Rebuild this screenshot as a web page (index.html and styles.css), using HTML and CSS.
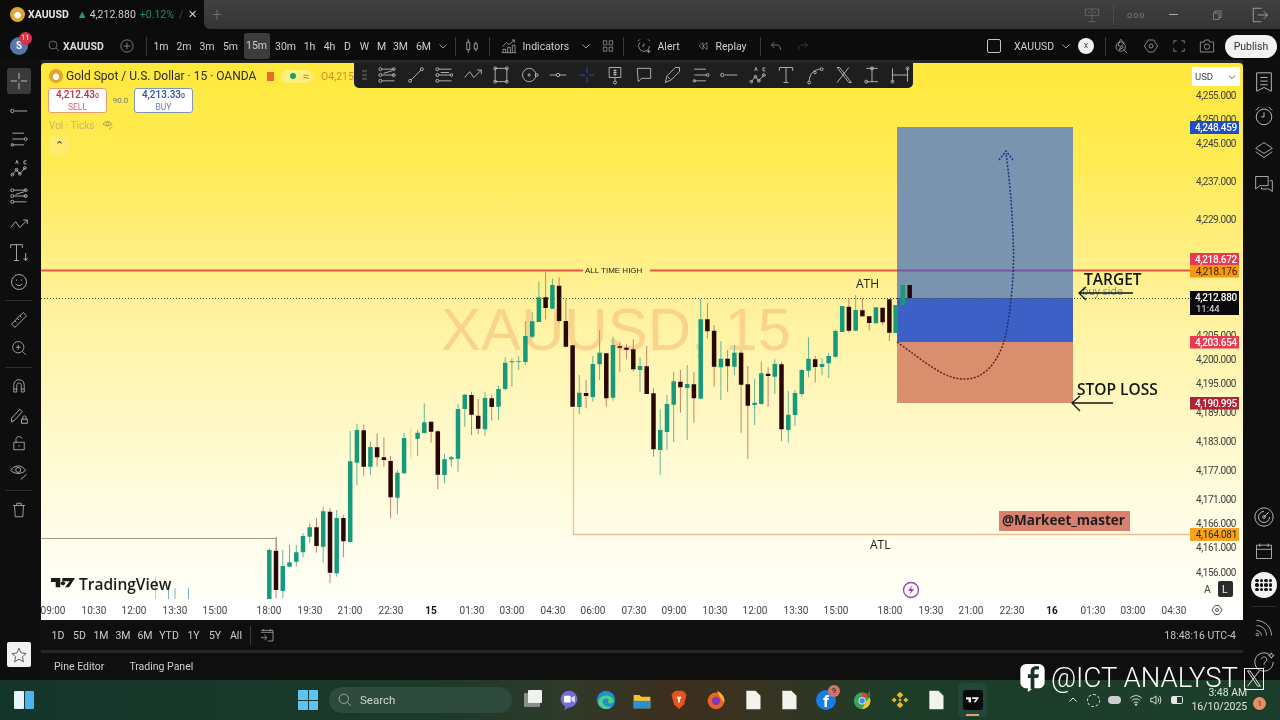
FILE: index.html
```html
<!DOCTYPE html>
<html lang="en">
<head>
<meta charset="utf-8">
<title>XAUUSD</title>
<link rel="stylesheet" href="styles.css">
</head>
<body>
<svg class="defs" aria-hidden="true">
  <symbol id="i-chan" viewBox="0 0 24 24"><path d="M6 5H21M6 12H21M6 19H21M8 10L18 7" /><circle cx="4" cy="5" r="1.8"/><circle cx="4" cy="12" r="1.8"/><circle cx="4" cy="19" r="1.8"/><circle cx="20" cy="5" r="1.8"/><circle cx="20" cy="12" r="1.8"/></symbol>
  <symbol id="i-trend" viewBox="0 0 24 24"><path d="M6 18L18 6"/><circle cx="5" cy="19" r="1.8"/><circle cx="19" cy="5" r="1.8"/></symbol>
  <symbol id="i-fib" viewBox="0 0 24 24"><path d="M6 5H21M6 19H21M6 12H20M8 9H18"/><circle cx="4" cy="5" r="1.8"/><circle cx="4" cy="12" r="1.8"/><circle cx="4" cy="19" r="1.8"/><circle cx="21" cy="12" r="1.5"/></symbol>
  <symbol id="i-zig" viewBox="0 0 24 24"><path d="M2 15L8 8L13 15L22 6M17 6H22V11"/></symbol>
  <symbol id="i-rect" viewBox="0 0 24 24"><path d="M5 4H19V20H5Z"/><circle cx="5" cy="4" r="1.7"/><circle cx="19" cy="4" r="1.7"/><circle cx="5" cy="20" r="1.7"/><circle cx="19" cy="20" r="1.7"/></symbol>
  <symbol id="i-circ" viewBox="0 0 24 24"><circle cx="11" cy="12" r="8"/><circle cx="11" cy="12" r="1.3"/><circle cx="20" cy="12" r="1.7"/></symbol>
  <symbol id="i-hline" viewBox="0 0 24 24"><path d="M2 12H10M14 12H22"/><circle cx="12" cy="12" r="2"/></symbol>
  <symbol id="i-cross" viewBox="0 0 24 24"><path d="M12 3V10M12 14V21M3 12H10M14 12H21"/></symbol>
  <symbol id="i-price" viewBox="0 0 24 24"><path d="M5 3H19V15H5ZM12 15V19M10 6.500H14M10 9H14M10 11.500H14M12 5V13"/><circle cx="12" cy="21" r="1.8"/></symbol>
  <symbol id="i-bubble" viewBox="0 0 24 24"><path d="M4 4H20V16H9L5 20Z"/></symbol>
  <symbol id="i-brush" viewBox="0 0 24 24"><path d="M4 21L6 13L16 3H21V8L11 18Z M7 14L10 17"/></symbol>
  <symbol id="i-lines" viewBox="0 0 24 24"><path d="M4 5H18M4 12H18M4 19H18"/><circle cx="20" cy="12" r="1.7"/><circle cx="4" cy="19" r="1.5"/></symbol>
  <symbol id="i-ray" viewBox="0 0 24 24"><path d="M7 12H22"/><circle cx="4" cy="12" r="2"/></symbol>
  <symbol id="i-abc" viewBox="0 0 24 24"><path d="M4 20L9 14L13 19L19 12"/><circle cx="4" cy="20" r="1.6"/><circle cx="9" cy="14" r="1.6"/><circle cx="13" cy="19" r="1.6"/><circle cx="19" cy="12" r="1.6"/><path d="M8 7L9.500 3L11 7M18 3.500H21M18 3.500V7H21"/></symbol>
  <symbol id="i-t" viewBox="0 0 24 24"><path d="M4 7V3H20V7M12 3V21M9 21H15"/></symbol>
  <symbol id="i-t2" viewBox="0 0 24 24"><path d="M2 6V2H16V6M9 2V21M6 21H12M20 12V21M17.500 18L20 21L22.500 18"/></symbol>
  <symbol id="i-curve" viewBox="0 0 24 24"><path d="M5 19C6 10 10 6 18 5"/><circle cx="5" cy="21" r="1.7"/><circle cx="12" cy="9" r="1.5"/><circle cx="20" cy="5" r="1.7"/></symbol>
  <symbol id="i-x" viewBox="0 0 24 24"><path d="M5 3L19 21M8 3L22 21M19 3L5 21M5 3H8M19 21H22"/></symbol>
  <symbol id="i-ibeam" viewBox="0 0 24 24"><path d="M5 4H19M5 20H19M12 4V20"/><circle cx="12" cy="4" r="1.8"/><circle cx="5" cy="20" r="1.8"/></symbol>
  <symbol id="i-range" viewBox="0 0 24 24"><path d="M3 4V20M21 4V20M3 12H21"/><circle cx="3" cy="20" r="1.7"/><circle cx="21" cy="4" r="1.7"/></symbol>
  <symbol id="i-smile" viewBox="0 0 24 24"><circle cx="12" cy="12" r="9"/><path d="M8 14C10 17 14 17 16 14M9 9V10.500M15 9V10.500"/></symbol>
  <symbol id="i-ruler" viewBox="0 0 24 24"><path d="M3 17L17 3L21 7L7 21ZM7 13L9 15M10 10L12 12M13 7L15 9"/></symbol>
  <symbol id="i-zoom" viewBox="0 0 24 24"><circle cx="11" cy="11" r="7.500"/><path d="M8 11H14M11 8V14M16.500 16.500L21 21"/></symbol>
  <symbol id="i-magnet" viewBox="0 0 24 24"><path d="M5 20V11C5 1 19 1 19 11V20H15V11C15 7 9 7 9 11V20ZM5 16H9M15 16H19"/></symbol>
  <symbol id="i-plock" viewBox="0 0 24 24"><path d="M3 16L13 5L16 8L6 19L3 20ZM15 17H22V22H15ZM16.500 17V15C16.500 12.500 20.500 12.500 20.500 15V17"/></symbol>
  <symbol id="i-lock" viewBox="0 0 24 24"><path d="M5 11H19V21H5ZM8 11V7C8 2.500 15 2.500 16 6M12 15V17"/></symbol>
  <symbol id="i-eye" viewBox="0 0 24 24"><path d="M2 10C7 3 15 3 20 10C15 15 7 15 2 10Z M14 21L21 15"/><circle cx="11" cy="9.500" r="3"/></symbol>
  <symbol id="i-trash" viewBox="0 0 24 24"><path d="M4 6H20M6 6L7 21H17L18 6M9 6V3H15V6"/></symbol>
  <symbol id="i-star" viewBox="0 0 24 24"><path d="M12 3L14.800 9.300L21.500 10L16.500 14.500L18 21L12 17.600L6 21L7.500 14.500L2.500 10L9.200 9.300Z"/></symbol>
  <symbol id="i-list" viewBox="0 0 24 24"><path d="M4 2H20V22L12 18L4 22ZM8 7H16M8 11H16M8 15H16"/></symbol>
  <symbol id="i-alarm" viewBox="0 0 24 24"><circle cx="12" cy="13" r="8.500"/><path d="M12 8V13H9M3 6L7 2M21 6L17 2"/></symbol>
  <symbol id="i-layers" viewBox="0 0 24 24"><path d="M12 3L22 10L12 16L2 10ZM2 14L12 21L22 14"/></symbol>
  <symbol id="i-chat" viewBox="0 0 24 24"><path d="M2 3H17V14H7L2 18ZM19 8H22V21L18 18H9V16"/></symbol>
  <symbol id="i-radar" viewBox="0 0 24 24"><circle cx="12" cy="12" r="10"/><path d="M17 7L12 12M12 6A6 6 0 1 0 18 12"/><circle cx="12" cy="12" r="1.500"/></symbol>
  <symbol id="i-cal" viewBox="0 0 24 24"><path d="M3 5H21V21H3ZM3 10H21M7 3V7M17 3V7"/></symbol>
  <symbol id="i-pod" viewBox="0 0 24 24"><path d="M3 3C13 3 21 11 21 21M3 9C10 9 15 14 15 21M3 15C6 15 9 18 9 21"/><circle cx="4" cy="20" r="1.500"/></symbol>
  <symbol id="i-help" viewBox="0 0 24 24"><path d="M18 4A10 10 0 1 0 22 12"/><path d="M9 9C10 5 16 6 15 10C14 12 12 12 12 15M12 18V18.500M20 2L21 4L23 5L21 6L20 8L19 6L17 5L19 4Z"/></symbol>
  <symbol id="i-hex" viewBox="0 0 24 24"><path d="M8 3H16L22 12L16 21H8L2 12Z"/><circle cx="12" cy="12" r="3"/></symbol>
  <symbol id="i-full" viewBox="0 0 24 24"><path d="M3 8V3H8M16 3H21V8M21 16V21H16M8 21H3V16"/></symbol>
  <symbol id="i-cam" viewBox="0 0 24 24"><path d="M2 6H8L9 3H15L16 6H22V21H2Z"/><circle cx="12" cy="13" r="4"/></symbol>
  <symbol id="i-flame" viewBox="0 0 24 24"><circle cx="10" cy="13" r="7"/><path d="M15 18L20 23M10 2L15 7L11 12L14 14L8 18L10 13L6 11Z"/></symbol>
  <symbol id="i-candles" viewBox="0 0 24 24"><path d="M7 3V7M7 17V21M17 6V9M17 16V19M5 7H9V17H5ZM15 9H19V16H15Z"/></symbol>
  <symbol id="i-ind" viewBox="0 0 24 24"><path d="M2 13L8 7L12 10L20 3M16 3H20V7M3 22V17H7V22M10 22V14H14V22M17 22V11H21V22M1 22H23"/></symbol>
  <symbol id="i-grid" viewBox="0 0 24 24"><path d="M4 3H10V10H4ZM14 3H20V10H14ZM4 14H10V21H4ZM14 14H20V21H14Z"/></symbol>
  <symbol id="i-alert" viewBox="0 0 24 24"><circle cx="12" cy="12" r="8" stroke-dasharray="30 20"/><path d="M3 5L6 2M21 5L18 2M12 8V12H9M19 17V23M16 20H22"/></symbol>
  <symbol id="i-replay" viewBox="0 0 24 24"><path d="M12 5L4 12L12 19ZM20 5L12 12L20 19Z"/></symbol>
  <symbol id="i-undo" viewBox="0 0 24 24"><path d="M9 4L3 10L9 16M3 10H14C19 10 21 14 21 20"/></symbol>
  <symbol id="i-redo" viewBox="0 0 24 24"><path d="M15 4L21 10L15 16M21 10H10C5 10 3 14 3 20"/></symbol>
  <symbol id="i-goto" viewBox="0 0 24 24"><path d="M3 8H21M7 3V6M17 3V6M3 5H21V21H13M3 16H11M8 12L12 16L8 20"/></symbol>
  <symbol id="i-search" viewBox="0 0 24 24"><circle cx="10" cy="10" r="8"/><path d="M16 16L22 22"/></symbol>
  <symbol id="i-plusc" viewBox="0 0 24 24"><circle cx="12" cy="12" r="10.500"/><path d="M12 6V18M6 12H18"/></symbol>
  <symbol id="i-chev" viewBox="0 0 12 12"><path d="M2.500 4.500L6 8L9.500 4.500"/></symbol>
  <symbol id="i-door" viewBox="0 0 24 24"><path d="M14 3H3V21H14M9 12H22M17 7L22 12L17 17"/></symbol>
  <symbol id="i-restore" viewBox="0 0 24 24"><path d="M5 8H16V21H5ZM8 8V4H20V17H16"/></symbol>
  <symbol id="i-pane" viewBox="0 0 24 24"><path d="M2 3H22V13H2ZM12 3V22M6 22H18M6 8H9M15 8H18"/></symbol>
  <symbol id="i-doc" viewBox="0 0 24 24"><path d="M4 1H15L21 7V23H4Z" /></symbol>
</svg>

<header class="titlebar">
  <div class="tab">
    <span class="coin"></span>
    <b class="tab-sym">XAUUSD</b>
    <span class="up">▲</span>
    <span class="tab-price">4,212.880</span>
    <span class="tab-chg">+0.12%</span>
    <span class="tab-slash">/</span>
    <span class="tab-close">✕</span>
  </div>
  <div class="title-rest">
    <span class="title-plus">+</span>
    <div class="win-ctrls">
      <svg class="ic16 dim"><use href="#i-pane"/></svg>
      <span class="win-sep"></span>
      <span class="win-dots">ooo</span>
      <span class="win-min"></span>
      <svg class="ic12 dim2"><use href="#i-restore"/></svg>
      <svg class="ic18 dim2"><use href="#i-door"/></svg>
    </div>
  </div>
</header>

<nav class="topbar">
  <div class="avatar">S<span class="badge-red">11</span></div>
  <svg class="ic12 ml20"><use href="#i-search"/></svg>
  <b class="sym ml3">XAUUSD</b>
  <svg class="ic14 ml17"><use href="#i-plusc"/></svg>
  <span class="tsep ml12"></span>
  <div class="intervals">
    <span class="iv w23">1m</span><span class="iv w23">2m</span><span class="iv w23">3m</span><span class="iv w24">5m</span>
    <span class="iv iv-on">15m</span>
    <span class="iv w26 ml3">30m</span><span class="iv w20 ml1">1h</span><span class="iv w20">4h</span><span class="iv w16">D</span><span class="iv w18">W</span><span class="iv w16">M</span><span class="iv w22">3M</span><span class="iv w24">6M</span>
    <svg class="ic12 chev"><use href="#i-chev"/></svg>
  </div>
  <span class="tsep ml6"></span>
  <svg class="ic18 ml7"><use href="#i-candles"/></svg>
  <span class="tsep ml8"></span>
  <svg class="ic16 ml11"><use href="#i-ind"/></svg>
  <span class="lbl w46 ml6">Indicators</span>
  <svg class="ic12 chev ml11"><use href="#i-chev"/></svg>
  <svg class="ic14 ml9"><use href="#i-grid"/></svg>
  <span class="tsep ml8"></span>
  <svg class="ic16 ml12"><use href="#i-alert"/></svg>
  <span class="lbl w23 ml6">Alert</span>
  <svg class="ic12 ml16"><use href="#i-replay"/></svg>
  <span class="lbl w32 ml7">Replay</span>
  <span class="tsep ml12"></span>
  <svg class="ic12 ml9"><use href="#i-undo"/></svg>
  <svg class="ic12 ml15 faint"><use href="#i-redo"/></svg>
  <span class="layout-box"></span>
  <span class="lbl w36 ml13">XAUUSD</span>
  <svg class="ic12 chev ml10"><use href="#i-chev"/></svg>
  <span class="x-circle ml6">x</span>
  <span class="tsep ml11"></span>
  <svg class="ic16 ml8"><use href="#i-flame"/></svg>
  <svg class="ic16 ml13"><use href="#i-hex"/></svg>
  <svg class="ic14 ml13"><use href="#i-full"/></svg>
  <svg class="ic16 ml13"><use href="#i-cam"/></svg>
  <span class="publish ml10">Publish</span>
</nav>

<div class="main">
  <aside class="lefttools">
    <span class="tool tool-on"><svg class="ic22"><use href="#i-cross"/></svg></span>
    <span class="tool"><svg class="ic20"><use href="#i-ray"/></svg></span>
    <span class="tool"><svg class="ic20"><use href="#i-lines"/></svg></span>
    <span class="tool"><svg class="ic20"><use href="#i-abc"/></svg></span>
    <span class="tool"><svg class="ic20"><use href="#i-chan"/></svg></span>
    <span class="tool"><svg class="ic20"><use href="#i-zig"/></svg></span>
    <span class="tool"><svg class="ic20"><use href="#i-t2"/></svg></span>
    <span class="tool"><svg class="ic20"><use href="#i-smile"/></svg></span>
    <span class="lsep"></span>
    <span class="tool"><svg class="ic20"><use href="#i-ruler"/></svg></span>
    <span class="tool"><svg class="ic18"><use href="#i-zoom"/></svg></span>
    <span class="lsep"></span>
    <span class="tool"><svg class="ic18"><use href="#i-magnet"/></svg></span>
    <span class="tool"><svg class="ic20"><use href="#i-plock"/></svg></span>
    <span class="tool"><svg class="ic18"><use href="#i-lock"/></svg></span>
    <span class="tool"><svg class="ic20"><use href="#i-eye"/></svg></span>
    <span class="lsep"></span>
    <span class="tool"><svg class="ic18"><use href="#i-trash"/></svg></span>
    <span class="star-btn"><svg class="ic18 star"><use href="#i-star"/></svg></span>
  </aside>

  <div class="center">
    <section class="chart">
      <svg class="plot" viewBox="41 63 1202 557" width="1202" height="557">
        <text class="wm" x="441" y="350">XAUUSD, 15</text>
        <path class="lv-old" d="M41 538.500H276.500V550"/>
        <path class="lv-atl" d="M573.500 408V534.500H1190"/>
        <path class="lv-dot" d="M41 298.500H897"/>
        <g id="candles"></g>
        <path class="vol-a" d="M155.500 577V599"/>
        <path class="vol-b" d="M168.500 588V599M175 588V599M188.500 588V599"/>
        <rect class="zone-t" x="897" y="127" width="176" height="171"/>
        <rect class="zone-m" x="897" y="298" width="176" height="44"/>
        <rect class="zone-s" x="897" y="342" width="176" height="61"/>
        <path class="lv-ath" d="M41 270.500H583M650 270.500H1190"/>
        <path class="lv-ath-z" d="M897 270.500H1073"/>
        <path class="lv-dot" d="M897 298.500H1190"/>
        <path class="c-g" d="M895.600 305V333"/>
        <path class="c-g" d="M902.800 285V305"/>
        <path class="c-b" d="M909.700 285V298"/>
        <path class="arc-red" d="M897 342C925 362 945 380 965 379C988 379 1000 356 1005 338"/>
        <path class="arc-blue" d="M1005 338C1011 310 1015 270 1013 238C1012 205 1009 175 1006 153M999 160L1006 151L1013 160"/>
        <text class="ann-s" x="585" y="273">ALL TIME HIGH</text>
        <text class="ann" x="856" y="288">ATH</text>
        <text class="ann" x="870" y="549">ATL</text>
        <text class="buyside" x="1082" y="295">buy side</text>
        <text class="ann-l" x="1084" y="285">TARGET</text>
        <text class="ann-l" x="1077" y="395">STOP LOSS</text>
        <path class="ann-arrow" d="M1133 293H1079M1086 287L1079 293L1086 300"/>
        <path class="ann-arrow" d="M1113 403H1072M1080 396L1072 403L1080 411"/>
        <rect class="mm-bg" x="999" y="511" width="131" height="20"/>
        <text class="mm" x="1002" y="525">@Markeet_master</text>

        <g class="pr">
          <text x="1236" y="99">4,255.000</text><text x="1236" y="123">4,250.000</text><text x="1236" y="147">4,245.000</text><text x="1236" y="185">4,237.000</text><text x="1236" y="223">4,229.000</text><text x="1236" y="339">4,205.000</text><text x="1236" y="363">4,200.000</text><text x="1236" y="387">4,195.000</text><text x="1236" y="416">4,189.000</text><text x="1236" y="445">4,183.000</text><text x="1236" y="474">4,177.000</text><text x="1236" y="503">4,171.000</text><text x="1236" y="527">4,166.000</text><text x="1236" y="551">4,161.000</text><text x="1236" y="576">4,156.000</text>
        </g>
        <rect class="tg-blue" x="1190" y="121" width="49" height="13"/>
        <rect class="tg-red" x="1190" y="253" width="49" height="12.500"/>
        <rect class="tg-or" x="1190" y="265" width="49" height="12.500"/>
        <rect class="tg-blk" x="1190" y="291" width="49" height="24"/>
        <rect class="tg-red" x="1190" y="336" width="49" height="12.500"/>
        <rect class="tg-dred" x="1190" y="397" width="49" height="12.500"/>
        <rect class="tg-or2" x="1190" y="528" width="49" height="13"/>
        <g class="pr-w">
          <text x="1237" y="131">4,248.459</text><text x="1237" y="263">4,218.672</text><text x="1237" y="301">4,212.880</text><text x="1237" y="346">4,203.654</text><text x="1237" y="407">4,190.995</text>
        </g>
        <text class="pr-time" x="1196" y="312">11:44</text>
        <g class="pr-d"><text x="1237" y="275">4,218.176</text><text x="1237" y="538">4,164.081</text></g>

        <rect class="axis-bg" x="41" y="600" width="1202" height="20"/>
        <g class="tm">
          <text x="53" y="614">09:00</text><text x="94" y="614">10:30</text><text x="134" y="614">12:00</text><text x="175" y="614">13:30</text><text x="215" y="614">15:00</text><text x="269" y="614">18:00</text><text x="310" y="614">19:30</text><text x="350" y="614">21:00</text><text x="391" y="614">22:30</text><text class="tm-b" x="431" y="614">15</text><text x="472" y="614">01:30</text><text x="512" y="614">03:00</text><text x="553" y="614">04:30</text><text x="593" y="614">06:00</text><text x="634" y="614">07:30</text><text x="674" y="614">09:00</text><text x="715" y="614">10:30</text><text x="755" y="614">12:00</text><text x="796" y="614">13:30</text><text x="836" y="614">15:00</text><text x="890" y="614">18:00</text><text x="931" y="614">19:30</text><text x="971" y="614">21:00</text><text x="1012" y="614">22:30</text><text class="tm-b" x="1052" y="614">16</text><text x="1093" y="614">01:30</text><text x="1133" y="614">03:00</text><text x="1174" y="614">04:30</text>
        </g>
        <circle class="bolt-c" cx="911" cy="590" r="7.500"/>
        <path class="bolt" d="M912.500 585L908 591H911L909.500 595L914 589H911Z"/>
        <text class="auto" x="1204" y="593">A</text>
        <rect class="l-box" x="1218" y="581" width="15" height="16" rx="2"/>
        <text class="l-t" x="1222" y="593">L</text>
        <use class="gear" href="#i-hex" x="1211" y="604" width="12" height="12"/>
      </svg>

      <div class="legend">
        <div class="leg-row">
          <span class="coin coin-sm"></span>
          <span class="leg-title">Gold Spot / U.S. Dollar · 15 · OANDA</span>
          <span class="leg-flag"></span>
          <span class="leg-pill"><i class="dot-g"></i><i class="eq">≈</i></span>
          <span class="leg-o">O4,215.</span>
        </div>
        <div class="trade">
          <div class="tbtn tbtn-s"><span class="tb-p">4,212.43<small>0</small></span><span class="tb-l">SELL</span></div>
          <span class="spread">90.0</span>
          <div class="tbtn tbtn-b"><span class="tb-p">4,213.33<small>0</small></span><span class="tb-l">BUY</span></div>
        </div>
        <div class="vol">Vol · Ticks <svg class="ic12 eye-off"><use href="#i-eye"/></svg></div>
        <span class="collapse">⌃</span>
      </div>

      <div class="drawbar">
        <span class="grip"></span>
        <svg class="dt"><use href="#i-chan"/></svg><svg class="dt"><use href="#i-trend"/></svg><svg class="dt"><use href="#i-fib"/></svg><svg class="dt"><use href="#i-zig"/></svg><svg class="dt"><use href="#i-rect"/></svg><svg class="dt"><use href="#i-circ"/></svg><svg class="dt"><use href="#i-hline"/></svg><svg class="dt dt-on"><use href="#i-cross"/></svg><svg class="dt"><use href="#i-price"/></svg><svg class="dt"><use href="#i-bubble"/></svg><svg class="dt"><use href="#i-brush"/></svg><svg class="dt"><use href="#i-lines"/></svg><svg class="dt"><use href="#i-ray"/></svg><svg class="dt"><use href="#i-abc"/></svg><svg class="dt"><use href="#i-t"/></svg><svg class="dt"><use href="#i-curve"/></svg><svg class="dt"><use href="#i-x"/></svg><svg class="dt"><use href="#i-ibeam"/></svg><svg class="dt"><use href="#i-range"/></svg>
      </div>

      <div class="usd">USD<svg class="ic10"><use href="#i-chev"/></svg></div>

      <div class="tvlogo">
        <svg class="tv-mark" viewBox="0 0 36 18"><path d="M0 0H14V14H7V6H0ZM17 0H36L27 14H21L28 5H17Z"/><circle cx="18" cy="8" r="3.200"/></svg>
        <span>TradingView</span>
      </div>
    </section>

    <div class="rangebar">
      <span class="r w22">1D</span><span class="r w21">5D</span><span class="r w22">1M</span><span class="r w22">3M</span><span class="r w22">6M</span><span class="r w26">YTD</span><span class="r w23">1Y</span><span class="r w20">5Y</span><span class="r w22">All</span>
      <span class="tsep ml3"></span>
      <svg class="ic16 ml8"><use href="#i-goto"/></svg>
      <span class="clock">18:48:16 UTC-4</span>
    </div>
    <div class="panelbar">
      <span>Pine Editor</span>
      <span>Trading Panel</span>
    </div>
  </div>

  <aside class="rightbar">
    <span class="rt"><svg class="ic22"><use href="#i-list"/></svg></span>
    <span class="rt"><svg class="ic22"><use href="#i-alarm"/></svg></span>
    <span class="rt"><svg class="ic20"><use href="#i-layers"/></svg></span>
    <span class="rt"><svg class="ic20"><use href="#i-chat"/></svg></span>
    <span class="rt rt-push"><svg class="ic22"><use href="#i-radar"/></svg></span>
    <span class="rt"><svg class="ic20"><use href="#i-cal"/></svg></span>
    <span class="rt"><span class="apps"><i></i><i></i><i></i><i></i><i></i><i></i><i></i><i></i><i></i><i></i><i></i><i></i></span></span>
    <span class="rsep"></span>
    <span class="rt"><svg class="ic20"><use href="#i-pod"/></svg></span>
    <span class="rt"><svg class="ic22"><use href="#i-help"/></svg></span>
  </aside>
</div>

<footer class="taskbar">
  <span class="widgets"><i></i><i></i></span>
  <span class="winlogo"><i></i><i></i><i></i><i></i></span>
  <div class="tsearch"><svg class="ic14 srch"><use href="#i-search"/></svg><span>Search</span></div>
  <span class="app taskview"><i></i></span>
  <svg class="app app-clip" viewBox="0 0 24 24"><circle cx="12" cy="11" r="10" fill="#7a6bd8"/><rect x="6" y="7" width="8" height="8" rx="1" fill="#fff"/><path d="M15 9L19 7V15L15 13Z" fill="#e8e4ff"/><path d="M8 19L6 24L13 20Z" fill="#7a6bd8"/></svg>
  <svg class="app" viewBox="0 0 24 24"><circle cx="12" cy="12" r="11" fill="#1b8fd8"/><path d="M3 13C5 5 19 4 21 13C21 17 15 17 14 14C18 11 10 8 8 13C7 18 13 21 19 20C13 26 2 22 3 13Z" fill="#52d07a"/></svg>
  <svg class="app" viewBox="0 0 24 24"><path d="M2 6H9L11 8H22V22H2Z" fill="#f4c430"/><rect x="2" y="13" width="20" height="9" fill="#2b8fd6"/></svg>
  <svg class="app" viewBox="0 0 24 24"><path d="M5 3L8 1H16L19 3L21 6L18 17L12 23L6 17L3 6Z" fill="#e8531f"/><path d="M9 8H15L13 12V15H11V12Z" fill="#fff"/></svg>
  <svg class="app" viewBox="0 0 24 24"><circle cx="12" cy="13" r="10" fill="#e8651f"/><circle cx="12" cy="13" r="5" fill="#7a3bb8"/><path d="M13 1C20 4 23 10 22 15L17 9Z" fill="#f7b32b"/></svg>
  <svg class="app doc" viewBox="0 0 24 24"><use href="#i-doc"/></svg>
  <svg class="app doc" viewBox="0 0 24 24"><use href="#i-doc"/></svg>
  <span class="app fb"><b>f</b><i>9</i></span>
  <svg class="app" viewBox="0 0 24 24"><circle cx="11" cy="13" r="10" fill="#3aa655"/><path d="M11 3A10 10 0 0 1 20 9H11Z" fill="#d9433a"/><path d="M20 9A10 10 0 0 1 11 23L15 15Z" fill="#f2c230"/><circle cx="11" cy="13" r="4" fill="#4a8df0" stroke="#fff"/><path d="M16 8L20 0L21 8Z" fill="#2e7d32"/></svg>
  <svg class="app" viewBox="0 0 24 24"><path d="M12 2L16 6L12 10L8 6ZM5 9L8 12L5 15L2 12ZM19 9L22 12L19 15L16 12ZM12 14L16 18L12 22L8 18ZM12 10L14 12L12 14L10 12Z" fill="#e8b62c"/></svg>
  <svg class="app doc" viewBox="0 0 24 24"><use href="#i-doc"/></svg>
  <span class="tvapp"><span class="tvapp-ic"><svg viewBox="0 0 36 18"><path d="M0 0H14V14H7V6H0ZM17 0H36L27 14H21L28 5H17Z"/></svg></span><i></i></span>
  <div class="tray">
    <svg class="ic12"><use href="#i-chev"/></svg>
    <span class="sync"></span>
    <span class="cloud"></span>
    <svg class="ic14" viewBox="0 0 24 24"><path class="tray-l" d="M2 9C8 3 16 3 22 9M5 13C9 9 15 9 19 13M8 17C10 15 14 15 16 17"/><circle cx="12" cy="20" r="1.500" fill="#e6e6e6"/></svg>
    <svg class="ic14" viewBox="0 0 24 24"><path class="tray-l" d="M3 9H7L12 5V19L7 15H3ZM15 8C17 10 17 14 15 16M18 5C21 9 21 15 18 19"/></svg>
    <span class="batt"><i></i></span>
    <div class="tclock"><span>3:48 AM</span><span>16/10/2025</span></div>
    <span class="notif">1</span>
  </div>
</footer>

<div class="watermark">
  <svg class="wm-fb" viewBox="0 0 26 30"><path d="M6 0H20C23 0 26 3 26 6V20C26 23 23 26 20 26H14L8 30V26H6C3 26 0 23 0 20V6C0 3 3 0 6 0Z" fill="#fff"/><path d="M15 27V15H19L20 11H15V8C15 6.500 16 6 17 6H20V2.500H16.500C13 2.500 11 5 11 8V11H8V15H11V27Z" fill="#16352a"/></svg>
  <span class="wm-t">@ICT ANALYST</span>
  <span class="wm-x"><svg viewBox="0 0 20 22"><path d="M3 2L15 20M6 2L18 20M17 2L3 20M3 2H6M15 20H18"/></svg></span>
</div>

<script src="chart.js"></script>
</body>
</html>
```

FILE: styles.css
```css
* { box-sizing: border-box; }
html, body { margin: 0; padding: 0; }
html { background: #0e0e0e; }
body {
  position: relative;
  width: 1280px;
  height: 720px;
  overflow: hidden;
  background: #0e0e0e;
  color: #d4d4d4;
  font-family: Roboto, "Liberation Sans", sans-serif;
  font-size: 10.5px;
  display: flex;
  flex-direction: column;
  filter: blur(.35px);
}
.defs { position: absolute; width: 0; height: 0; }
svg { display: block; flex: none; fill: none; stroke: #c4c4c4; stroke-width: 1; overflow: visible; }
symbol { overflow: visible; }

.ic10 { width: 10px; height: 10px; }
.ic12 { width: 12px; height: 12px; }
.ic14 { width: 14px; height: 14px; }
.ic16 { width: 16px; height: 16px; }
.ic18 { width: 18px; height: 18px; }
.ic20 { width: 20px; height: 20px; }
.ic22 { width: 22px; height: 22px; }

.ml1 { margin-left: 1px; } .ml3 { margin-left: 3px; } .ml4 { margin-left: 4px; } .ml6 { margin-left: 6px; }
.ml7 { margin-left: 7px; } .ml8 { margin-left: 8px; } .ml9 { margin-left: 9px; } .ml10 { margin-left: 10px; }
.ml11 { margin-left: 11px; } .ml12 { margin-left: 12px; } .ml13 { margin-left: 13px; } .ml15 { margin-left: 15px; }
.ml16 { margin-left: 16px; } .ml17 { margin-left: 17px; } .ml20 { margin-left: 20px; }
.w16 { width: 16px; } .w18 { width: 18px; } .w20 { width: 20px; } .w21 { width: 21px; } .w22 { width: 22px; }
.w23 { width: 23px; } .w24 { width: 24px; } .w26 { width: 26px; } .w32 { width: 32px; } .w36 { width: 36px; } .w46 { width: 46px; }

/* title bar */
.titlebar { display: flex; height: 29px; flex: none; background: #0b0b0b; }
.tab { width: 204px; display: flex; align-items: center; padding-left: 10px; white-space: nowrap; font-size: 10.5px; color: #cfcfcf; }
.coin { width: 15px; height: 15px; border-radius: 50%; flex: none; background: radial-gradient(circle at 50% 55%, #fff 0 3px, #e3a62a 3.5px); }
.coin-sm { width: 14px; height: 14px; }
.tab-sym { margin-left: 3px; color: #e6e6e6; }
.up { margin-left: 8px; color: #1a9c7e; font-size: 11px; }
.tab-price { margin-left: 2px; }
.tab-chg { margin-left: 4px; color: #1d8f76; }
.tab-slash { margin-left: 5px; color: #444; }
.tab-close { margin-left: 5px; font-size: 11px; color: #d8d8d8; }
.title-rest { flex: 1; display: flex; align-items: center; background: linear-gradient(#414141, #343434); border-bottom-left-radius: 6px; }
.title-plus { margin-left: 8px; font-size: 18px; font-weight: 300; color: #707070; }
.win-ctrls { margin-left: auto; display: flex; align-items: center; padding-right: 11px; }
.dim { stroke: #777; }
.dim2 { stroke: #b8b8b8; }
.win-sep { width: 1px; height: 20px; background: #4a4a4a; margin-left: 13px; }
.win-dots { margin-left: 13px; font-size: 9px; letter-spacing: 1px; color: #7c7c7c; width: 20px; }
.win-min { width: 9px; height: 1.5px; background: #a8a8a8; margin-left: 22px; }
.titlebar .ic12 { margin-left: 33px; }
.titlebar .ic18 { margin-left: 28px; }

/* toolbar */
.topbar { display: flex; align-items: center; height: 31px; flex: none; padding: 3px 0 0 10px; white-space: nowrap; background: #0c0c0c; font-size: 10.5px; }
.avatar { position: relative; width: 18px; height: 18px; border-radius: 50%; background: #5776ad; color: #fff; font-weight: 700; font-size: 10px; text-align: center; line-height: 18px; flex: none; }
.badge-red { position: absolute; top: -5px; left: 9px; width: 13px; height: 13px; border-radius: 50%; background: #d93348; font-size: 7px; font-weight: 400; line-height: 13px; }
.sym { width: 40px; color: #dcdcdc; font-size: 10.5px; }
.tsep { width: 1px; height: 19px; background: #3a3a3a; flex: none; }
.intervals { display: flex; align-items: center; margin-left: 2.5px; }
.iv { text-align: center; color: #cfcfcf; flex: none; }
.iv-on { width: 26px; height: 26px; margin-left: 1px; line-height: 26px; background: #3c3c3c; border-radius: 3px; }
.chev { stroke: #9a9a9a; }
.intervals .chev { margin-left: 1px; }
.lbl { flex: none; color: #cfcfcf; }
.faint { stroke: #5f5f5f; }
.layout-box { margin-left: auto; width: 14px; height: 14px; border: 1px solid #c4c4c4; border-radius: 2px; flex: none; }
.x-circle { width: 16px; height: 16px; border-radius: 50%; background: #efefef; color: #555; font-size: 9px; line-height: 15px; text-align: center; flex: none; }
.publish { width: 52px; height: 23px; margin-right: 3px; border-radius: 12px; background: #f2f2f2; color: #333; text-align: center; line-height: 23px; font-size: 10.5px; flex: none; }

/* main */
.main { flex: 1; display: flex; min-height: 0; }
.lefttools { width: 37px; flex: none; display: flex; flex-direction: column; align-items: center; padding-top: 8px; margin-right: 4px; }
.tool { width: 37px; height: 28.500px; display: flex; align-items: center; justify-content: center; flex: none; }
.tool-on { width: 24px; height: 26px; margin-bottom: 2.500px; background: #3a3a3a; border-radius: 3px; }
.lsep { width: 27px; height: 1px; margin: 4.250px 0; background: #2c2c2c; flex: none; }
.star-btn { margin-top: auto; margin-bottom: 13px; width: 24px; height: 25px; background: #f2f2f2; border-radius: 2px; display: flex; align-items: center; justify-content: center; }
.star { stroke: #333; }

.center { width: 1202px; flex: none; padding-top: 3px; display: flex; flex-direction: column; background: #262626; }
.chart { position: relative; height: 557px; flex: none; overflow: hidden; border-radius: 4px 4px 0 0;
  background: linear-gradient(#ffe93c 0%, #ffeb55 18%, #fff198 42%, #fff9c8 65%, #fffdea 85%, #fffffb 100%); }
.plot { position: absolute; left: 0; top: 0; stroke: none; fill: none; }
.wm { font-family: "Liberation Sans", sans-serif; font-size: 60px; fill: rgba(240, 140, 80, .30); }
.lv-old { stroke: #a89a88; }
.lv-atl { stroke: #e8c08e; stroke-width: 1.300; }
.lv-dot { stroke: #4a4428; stroke-dasharray: 1 2; }
.lv-ath { stroke: #e3584a; stroke-width: 2; }
.lv-ath-z { stroke: #7b5a9f; stroke-width: 2; }
.c-w-g { stroke: #67b596; stroke-width: 1; }
.c-w-r { stroke: #c9806e; stroke-width: 1; }
.c-w-p { stroke: #edc7a0; stroke-width: 1; }
.c-g { stroke: #179a7b; stroke-width: 4.500; }
.c-b { stroke: #2a0707; stroke-width: 4.500; }
.vol-a { stroke: #f0b6b6; }
.vol-b { stroke: #6fb5b8; }
.zone-t { fill: #7a93ae; }
.zone-m { fill: #3c60c6; }
.zone-s { fill: #d98f6e; }
.arc-red { stroke: #6e1f20; stroke-width: 1.500; stroke-dasharray: 2 1.500; }
.arc-blue { stroke: #1b2f82; stroke-width: 1.500; stroke-dasharray: 2 1.500; }
.ann-s { font-family: "Liberation Sans", sans-serif; font-size: 8px; fill: #222; }
.ann { font-family: "Open Sans", sans-serif; font-size: 12px; fill: #222; }
.ann-l { font-family: "Open Sans", sans-serif; font-size: 15.500px; font-weight: 600; fill: #151515; }
.buyside { font-family: "Open Sans", sans-serif; font-size: 10.500px; fill: #6f8aa6; }
.ann-arrow { stroke: #141414; stroke-width: 1.300; }
.mm-bg { fill: #d97f6d; }
.mm { font-family: "Open Sans", sans-serif; font-size: 13.500px; font-weight: 700; fill: #1d1d1d; }
.pr text { text-anchor: end; font-size: 10px; letter-spacing: -.45px; fill: #3d3d3d; }
.pr-w text { text-anchor: end; font-size: 10px; letter-spacing: -.3px; fill: #fff; font-weight: 500; }
.pr-d text { text-anchor: end; font-size: 10px; letter-spacing: -.3px; fill: #3a2300; }
.pr-time { font-size: 9.500px; fill: #e6e6e6; }
.tg-blue { fill: #1e4fc2; }
.tg-red { fill: #e63b50; }
.tg-dred { fill: #b02234; }
.tg-or { fill: #f7980f; }
.tg-or2 { fill: #f7a51f; }
.tg-blk { fill: #0a0a0a; }
.axis-bg { fill: #fffffd; }
.tm text { text-anchor: middle; font-size: 10px; fill: #444; }
.tm .tm-b { font-weight: 700; fill: #111; }
.bolt-c { stroke: #9b3fb5; stroke-width: 1.300; fill: none; }
.bolt { fill: #9b3fb5; }
.auto { font-size: 10.500px; fill: #444; }
.l-box { fill: #2b2b2b; }
.l-t { font-size: 10.500px; fill: #eee; }
.gear { stroke: #444; stroke-width: 1.800; }

.legend { position: absolute; left: 8px; top: 6px; }
.leg-row { display: flex; align-items: center; height: 14px; white-space: nowrap; }
.leg-title { margin-left: 3px; width: 192px; flex: none; font-size: 12px; color: #2b2b2b; }
.leg-flag { width: 7px; height: 9px; margin-left: 9px; flex: none; background: #ec6a32; }
.leg-pill { width: 32px; height: 13px; margin-left: 7px; border-radius: 7px; background: #fdf07f; display: flex; align-items: center; justify-content: space-between; padding: 0 4px 0 9px; }
.dot-g { width: 6px; height: 6px; border-radius: 50%; background: #1f9d6d; }
.eq { font-style: normal; color: #d9702c; font-size: 11px; line-height: 11px; }
.leg-o { margin-left: 8px; color: #d88a35; font-size: 10.500px; }
.trade { display: flex; align-items: center; margin-top: 5px; margin-left: -1px; }
.tbtn { width: 59px; height: 25px; background: #fff; border-radius: 3px; display: flex; flex-direction: column; align-items: center; justify-content: center; line-height: 11px; }
.tbtn-s { border: 1px solid #e89a70; color: #b8303f; }
.tbtn-b { border: 1px solid #7b97b8; color: #2c52a8; }
.tb-p { font-size: 10px; font-weight: 500; }
.tb-p small { font-size: 7px; }
.tb-l { font-size: 8.500px; opacity: .75; }
.spread { width: 27px; text-align: center; color: #777; font-size: 8px; }
.vol { display: flex; align-items: center; gap: 7px; margin-top: 5px; color: #c2b870; font-size: 10px; height: 14px; }
.eye-off { stroke: #6e6a3a; }
.collapse { display: block; width: 20px; height: 18px; margin-top: 4px; background: #ffec6e; border-radius: 2px; text-align: center; line-height: 20px; color: #333; font-size: 11px; }

.drawbar { position: absolute; left: 313px; top: -1px; width: 559px; height: 26px; display: flex; align-items: center; padding-left: 8px; background: #1e1e1e; border-radius: 0 0 5px 5px; }
.grip { width: 5px; height: 12px; margin-right: 6px; flex: none; background-image: radial-gradient(#5a5a5a 0.8px, transparent 1px); background-size: 2.500px 4px; }
.dt { width: 20px; height: 20px; margin: 0 4.250px; stroke: #c8c8c8; }
.dt-on { stroke: #2b5bbf; }
.usd { position: absolute; left: 1151px; top: 4px; width: 48px; height: 19px; padding: 0 3px; background: #fff; color: #444; font-size: 9.500px; display: flex; align-items: center; justify-content: space-between; }
.usd svg { stroke: #444; }
.tvlogo { position: absolute; left: 10px; top: 511px; display: flex; align-items: center; gap: 4px; color: #1b1b1b; font-family: "Open Sans", sans-serif; font-weight: 600; font-size: 15.500px; line-height: 20px; }
.tv-mark { width: 24px; height: 12px; stroke: none; fill: #1b1b1b; }

.rangebar { height: 30px; flex: none; display: flex; align-items: center; padding-left: 6px; background: #0f0f0f; }
.r { text-align: center; flex: none; color: #cfcfcf; }
.clock { margin-left: auto; margin-right: 7px; color: #c4c4c4; font-size: 10.500px; }
.panelbar { height: 27px; margin-top: 3px; flex: none; display: flex; align-items: center; gap: 25px; padding-left: 13px; background: #0f0f0f; color: #cfcfcf; }

.rightbar { width: 33px; margin-left: 4px; flex: none; display: flex; flex-direction: column; align-items: center; padding: 5px 0 1px; }
.rt { width: 33px; height: 34px; flex: none; display: flex; align-items: center; justify-content: center; }
.rt-push { margin-top: auto; }
.rsep { width: 24px; height: 1px; margin: 4px 0; background: #2c2c2c; flex: none; }
.apps { width: 26px; height: 26px; border-radius: 50%; background: #f2f2f2; display: grid; grid-template-columns: repeat(4, 3.500px); grid-auto-rows: 3.500px; gap: 1px; padding: 5px 4px; justify-content: center; align-content: center; }
.apps i { background: #111; border-radius: 50%; }

/* taskbar */
.taskbar { height: 40px; flex: none; display: flex; align-items: center; position: relative; background: linear-gradient(90deg, #14352a 0, #1a3a2a 33%, #2f3a2a 44%, #3c2f1f 52%, #3b3220 58%, #1d3d29 70%, #1b3e2a 100%); }
.widgets { display: flex; gap: 1px; margin-left: 14px; width: 20px; height: 18px; }
.widgets i { flex: 1; background: #4db2ef; border-radius: 1px; }
.widgets i:first-child { background: #e8f4fb; }
.winlogo { margin-left: 264px; width: 20px; height: 20px; display: grid; grid-template-columns: 1fr 1fr; gap: 1px; }
.winlogo i { background: #5cc4f5; }
.tsearch { width: 183px; height: 26px; margin-left: 11px; border-radius: 13px; background: #2d4a3d; display: flex; align-items: center; gap: 8px; padding-left: 9px; color: #cfd6d0; font-size: 11.500px; }
.srch { stroke: #e6e6e6; }
.app { width: 20px; height: 20px; margin-left: 16.750px; stroke: none; flex: none; }
.taskview { margin-left: 12px; position: relative; background: #8d8d8d; width: 16px; height: 14px; border-radius: 1px; }
.taskview i { position: absolute; left: 4px; top: -3px; width: 14px; height: 13px; background: #f1f1f1; border-radius: 1px; }
.app-clip { margin-left: 18.750px; }
.doc { fill: #f3f3ee; stroke: none; }
.fb { position: relative; border-radius: 50%; background: #1b7ce8; color: #fff; text-align: center; }
.fb b { font-size: 17px; line-height: 22px; }
.fb i { position: absolute; top: -5px; right: -4px; width: 12px; height: 12px; border-radius: 50%; background: #d9736a; color: #222; font-style: normal; font-size: 8px; line-height: 12px; }
.tvapp { position: relative; margin-left: 12px; width: 29px; height: 34px; display: flex; align-items: center; justify-content: center; background: #21463a; border-radius: 4px; }
.tvapp-ic { width: 20px; height: 20px; background: #0a0a0a; border-radius: 3px; display: flex; align-items: center; justify-content: center; }
.tvapp-ic svg { width: 13px; height: 7px; stroke: none; fill: #f1f1f1; }
.tvapp i { position: absolute; bottom: 1px; left: 8px; width: 13px; height: 2px; background: #e89a70; }
.tray { display: flex; align-items: center; margin-left: 80px; position: relative; }
.tray > .ic12 { transform: rotate(180deg); stroke: #e6e6e6; }
.tray-l { stroke: #e6e6e6; stroke-width: 1.600; fill: none; }
.sync { width: 13px; height: 13px; margin-left: 8px; border: 1.500px dashed #e8e8e8; border-radius: 50%; position: relative; }
.cloud { width: 13px; height: 8px; margin: 0 8px; background: #cfcfcf; border-radius: 5px; }
.tray > .ic14 { margin-right: 6px; }
.batt { width: 12px; height: 8px; margin-left: 2px; border: 1.500px solid #e6e6e6; border-radius: 1.500px; }
.batt i { display: block; width: 5px; height: 100%; background: #e6e6e6; }
.tclock { width: 61px; margin-left: 3px; display: flex; flex-direction: column; align-items: flex-end; color: #e2e2e2; font-size: 10.500px; line-height: 14px; }
.notif { margin-left: 6px; width: 13px; height: 13px; border-radius: 50%; background: #e59067; color: #5a2a10; font-size: 8px; line-height: 13px; text-align: center; margin-top: 6px; }

/* social watermark over the window corner */
.watermark { position: absolute; left: 1020px; top: 664px; display: flex; align-items: center; color: #fff; }
.wm-fb { width: 25px; height: 28px; stroke: none; }
.wm-t { margin-left: 6px; width: 193px; flex: none; font-family: Roboto, sans-serif; font-weight: 300; font-size: 27.500px; line-height: 28px; white-space: nowrap; }
.wm-x { width: 20px; height: 22px; margin-top: 2px; border: 1.500px solid #fff; flex: none; }
.wm-x svg { width: 17px; height: 19px; stroke: #fff; }
```

FILE: chart.js
```js
// Candle rows: type (g = up, b = down, p = pale doji), body top, body bottom, wick top, wick bottom
// (vertical values are three times the pixel distance below y=270).
var rows = [
['g',840,988,835,990],['b',842,960,800,985],['g',888,963,840,985],['g',877,890,825,890],['g',847,875,825,890],['g',798,847,790,862],['g',772,800,760,820],['b',772,828,745,848],['g',724,830,710,878],['b',725,908,715,940],['g',744,910,720,920],['b',744,814,735,862],['g',574,816,483,818],['g',480,578,462,645],['b',481,590,463,617],['g',531,590,515,615],['b',532,562,490,590],['b',562,570,502,590],['b',573,682,558,745],['g',608,683,600,733],['g',504,610,488,610],['p',505,507,472,565],['g',488,506,480,558],['g',457,489,400,490],['b',455,485,455,518],['b',484,614,480,658],['g',568,615,552,640],['g',562,568,558,590],['g',417,566,402,605],['g',374,417,372,470],['b',375,434,365,495],['b',437,476,388,493],['g',384,478,365,497],['b',385,411,375,452],['g',357,410,347,450],['g',278,357,262,362],['g',274,277,265,350],['g',273,275,258,300],['g',198,276,153,285],['g',154,200,127,205],['g',82,156,35,156],['b',82,114,5,148],['g',45,116,25,116],['b',47,153,22,158],['b',153,230,85,232],['b',226,410,226,410],
['g',368,411,315,432],['b',369,378,330,415],['g',282,381,258,395],['g',248,283,180,330],['b',250,385,250,410],['g',225,383,200,392],['b',229,233,216,305],['b',233,239,222,268],['b',238,298,208,305],['g',288,300,262,365],['b',289,372,228,372],['b',370,538,355,560],['g',480,540,418,615],['g',402,486,375,540],['g',334,404,306,516],['b',335,352,300,428],['g',342,354,285,510],['b',343,385,306,458],['g',148,386,86,388],['b',148,184,100,205],['b',182,290,165,350],['g',266,292,213,390],['b',266,289,240,365],['g',248,290,225,315],['b',248,344,240,488],['b',343,407,288,567],['g',398,405,326,465],['g',310,402,275,404],['b',311,318,292,410],['g',282,320,268,372],['b',283,478,275,514],['g',434,480,363,518],['g',369,435,360,468],['g',300,372,298,380],['g',266,302,202,322],['b',268,291,258,338],['g',282,291,264,316],['g',258,280,248,324],['g',183,260,178,262],['g',108,186,108,186],['b',110,182,85,188],['g',120,182,75,184],['b',121,139,85,140],['b',139,159,139,182],['g',112,160,112,160],['b',113,157,113,165],['b',88,188,88,213]
];
var NS = 'http://www.w3.org/2000/svg';
var host = document.getElementById('candles');
function seg(cls, x, a, b) {
  var p = document.createElementNS(NS, 'path');
  p.setAttribute('class', cls);
  p.setAttribute('d', 'M' + x.toFixed(1) + ' ' + (270 + a / 3).toFixed(1) + 'V' + Math.min(599, 270 + b / 3).toFixed(1));
  host.appendChild(p);
}
rows.forEach(function (r, i) {
  var x = 269.3 + i * 6.74;
  var wick = r[0] === 'g' ? 'c-w-g' : r[0] === 'b' ? 'c-w-r' : 'c-w-p';
  seg(wick, x, r[3], r[4]);
  if (r[0] !== 'p') seg(r[0] === 'g' ? 'c-g' : 'c-b', x, r[1], r[2]);
});
```
